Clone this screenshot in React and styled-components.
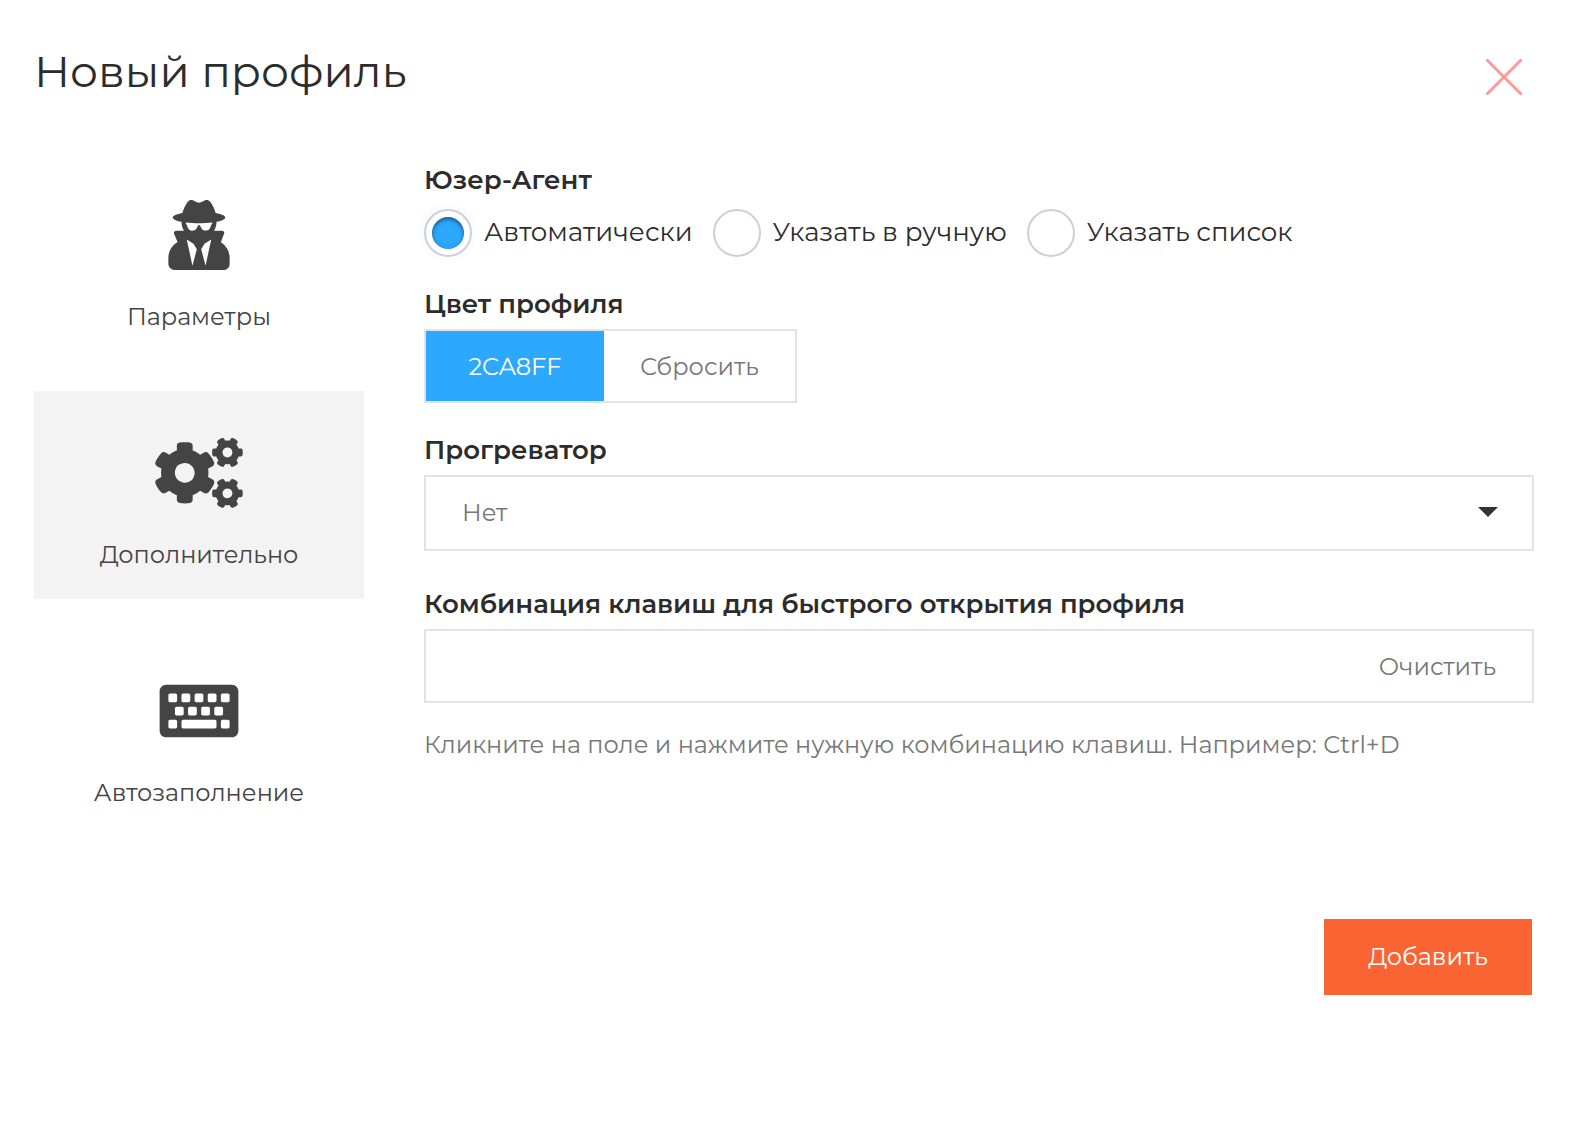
import React, { useState } from "react";
import styled, { createGlobalStyle } from "styled-components";
import { FaCogs, FaKeyboard, FaUserSecret } from "react-icons/fa";

const GlobalStyle = createGlobalStyle`
  * {
    box-sizing: border-box;
  }
  body {
    margin: 0;
    background: #fff;
    color: #2c2c2c;
    font-family: Montserrat, Inter, "Open Sans", sans-serif;
    font-size: 24px;
    font-weight: 400;
    line-height: 32px;
  }
  button,
  input,
  select {
    font: inherit;
    color: inherit;
  }
`;

const Modal = styled.form`
  padding: 47px 40px 40px 34px;
`;

const Header = styled.header`
  display: flex;
  justify-content: space-between;
  align-items: flex-start;
`;

const Title = styled.h1`
  margin: 0;
  font-size: 44px;
  font-weight: 400;
  line-height: 48px;
`;

const CloseButton = styled.button`
  display: grid;
  place-items: center;
  width: 60px;
  height: 60px;
  padding: 0;
  border: 0;
  background: none;
  color: #ff9a9a;
  cursor: pointer;
`;

const Body = styled.div`
  display: flex;
  gap: 60px;
  margin-top: 46px;
`;

const Sidebar = styled.nav`
  display: flex;
  flex: 0 0 330px;
  flex-direction: column;
  gap: 30px;
`;

const Tab = styled.button`
  display: flex;
  flex-direction: column;
  align-items: center;
  gap: 31px;
  padding: 47px 0 28px;
  border: 0;
  background: ${({ $active }) => ($active ? "#f3f3f3" : "transparent")};
  color: #444;
  cursor: pointer;

  svg {
    width: 100px;
    height: 70px;
  }
`;

const Content = styled.div`
  flex: 1;
  min-width: 0;
  padding-top: 11px;
`;

const Field = styled.div`
  display: flex;
  flex-direction: column;
  align-items: stretch;
  gap: ${({ $gap }) => $gap || 9}px;
  margin-bottom: ${({ $space }) => $space || 31}px;
`;

const Label = styled.label`
  font-size: 26px;
  font-weight: 600;
`;

const RadioRow = styled.div`
  display: flex;
  flex-wrap: wrap;
  gap: 20px;
`;

const RadioLabel = styled.label`
  display: flex;
  align-items: center;
  gap: 12px;
  font-size: 26px;
  cursor: pointer;
`;

const RadioText = styled.span`
  padding-bottom: 2px;
`;

const Radio = styled.input`
  appearance: none;
  display: grid;
  place-items: center;
  width: 48px;
  height: 48px;
  margin: 0;
  border: 2px solid #cdd0dc;
  border-radius: 50%;
  background: #fff;

  &:checked {
    box-shadow: 0 0 0 5px #fafcff;
  }

  &:checked::before {
    content: "";
    width: 32px;
    height: 32px;
    border-radius: 50%;
    background: #2ca8ff;
    box-shadow: inset 0 2px 4px rgba(0, 0, 0, 0.5);
  }
`;

const ColorGroup = styled.div`
  display: flex;
  align-self: flex-start;
  height: 74px;
  border: 2px solid #e3e3e3;
`;

const ColorButton = styled.button`
  width: 178px;
  padding: 2px 0 0;
  border: 0;
  background: #2ca8ff;
  color: #fff;
  cursor: pointer;
`;

const PlainButton = styled.button`
  padding: 2px 36px 0;
  border: 0;
  background: none;
  color: #777;
  cursor: pointer;
`;

const SelectBox = styled.div`
  position: relative;
`;

const Select = styled.select`
  appearance: none;
  display: block;
  width: 100%;
  height: 76px;
  padding: 0 72px 0 36px;
  border: 2px solid #e3e3e3;
  border-radius: 0;
  background: #fff;
  color: #777;
`;

const Caret = styled.svg`
  position: absolute;
  top: 32px;
  right: 36px;
  pointer-events: none;
`;

const HotkeyBox = styled.div`
  display: flex;
  height: 74px;
  border: 2px solid #e3e3e3;
`;

const HotkeyInput = styled.input`
  flex: 1;
  min-width: 0;
  padding: 0 36px;
  border: 0;
  background: none;
  outline: none;
`;

const Hint = styled.p`
  margin: 0;
  color: #777;
`;

const Footer = styled.footer`
  display: flex;
  justify-content: flex-end;
  margin-top: 82px;
  padding-right: 2px;
`;

const SubmitButton = styled.button`
  width: 208px;
  height: 76px;
  padding: 0;
  border: 0;
  background: #fa6432;
  color: #fff;
  cursor: pointer;
`;

const tabs = [
  { id: "params", title: "Параметры", Icon: FaUserSecret },
  { id: "extra", title: "Дополнительно", Icon: FaCogs },
  { id: "autofill", title: "Автозаполнение", Icon: FaKeyboard },
];

const agents = [
  { id: "auto", title: "Автоматически" },
  { id: "manual", title: "Указать в ручную" },
  { id: "list", title: "Указать список" },
];

const App = () => {
  const [tab, setTab] = useState("extra");
  const [agent, setAgent] = useState("auto");
  const [hotkey, setHotkey] = useState("");

  return (
    <>
      <GlobalStyle />
      <Modal onSubmit={(e) => e.preventDefault()}>
        <Header>
          <Title>Новый профиль</Title>
          <CloseButton type="button" aria-label="Закрыть">
            <svg width="38" height="38" viewBox="0 0 38 38">
              <path
                d="M1.5 1.5L36.5 36.5M36.5 1.5L1.5 36.5"
                stroke="currentColor"
                strokeWidth="3"
              />
            </svg>
          </CloseButton>
        </Header>
        <Body>
          <Sidebar>
            {tabs.map(({ id, title, Icon }) => (
              <Tab
                key={id}
                type="button"
                $active={tab === id}
                onClick={() => setTab(id)}
              >
                <Icon />
                <span>{title}</span>
              </Tab>
            ))}
          </Sidebar>
          <Content>
            <Field $gap={13} role="radiogroup" aria-labelledby="agent-label">
              <Label as="span" id="agent-label">
                Юзер-Агент
              </Label>
              <RadioRow>
                {agents.map(({ id, title }) => (
                  <RadioLabel key={id}>
                    <Radio
                      type="radio"
                      name="agent"
                      checked={agent === id}
                      onChange={() => setAgent(id)}
                    />
                    <RadioText>{title}</RadioText>
                  </RadioLabel>
                ))}
              </RadioRow>
            </Field>
            <Field>
              <Label htmlFor="color">Цвет профиля</Label>
              <ColorGroup>
                <ColorButton type="button" id="color">
                  2CA8FF
                </ColorButton>
                <PlainButton type="button">Сбросить</PlainButton>
              </ColorGroup>
            </Field>
            <Field $space={37}>
              <Label htmlFor="warmer">Прогреватор</Label>
              <SelectBox>
                <Select id="warmer">
                  <option>Нет</option>
                </Select>
                <Caret width="20" height="10" viewBox="0 0 20 10">
                  <path d="M0 0H20L10 10Z" fill="#333" />
                </Caret>
              </SelectBox>
            </Field>
            <Field $space={26}>
              <Label htmlFor="hotkey">
                Комбинация клавиш для быстрого открытия профиля
              </Label>
              <HotkeyBox>
                <HotkeyInput
                  id="hotkey"
                  value={hotkey}
                  onChange={(e) => setHotkey(e.target.value)}
                />
                <PlainButton type="button" onClick={() => setHotkey("")}>
                  Очистить
                </PlainButton>
              </HotkeyBox>
            </Field>
            <Hint>
              Кликните на поле и нажмите нужную комбинацию клавиш. Например:
              Ctrl+D
            </Hint>
          </Content>
        </Body>
        <Footer>
          <SubmitButton type="submit">Добавить</SubmitButton>
        </Footer>
      </Modal>
    </>
  );
};

export default App;
